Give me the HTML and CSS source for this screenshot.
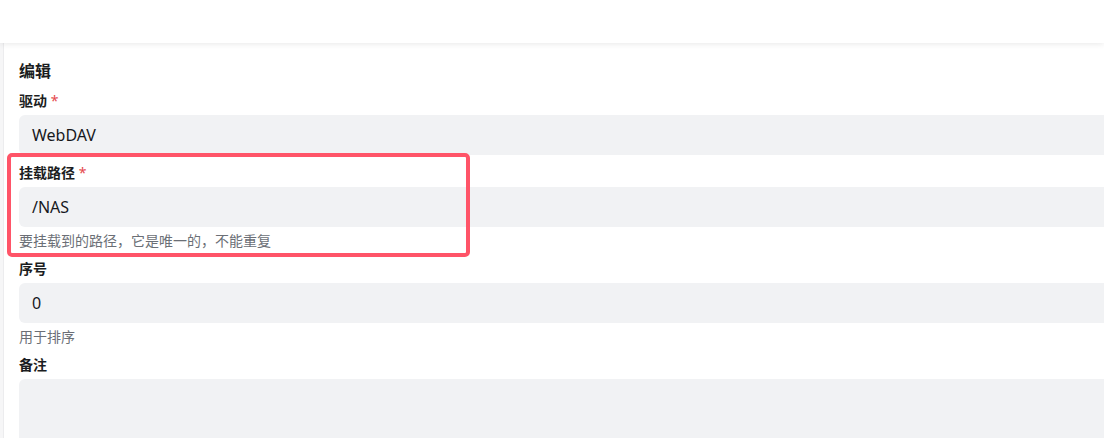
FILE: index.html
```html
<!DOCTYPE html>
<html lang="zh-CN">
<head>
<meta charset="utf-8">
<link rel="stylesheet" href="styles.css">
</head>
<body>
<header class="topbar"></header>
<main class="page">
  <section class="card">
    <h2 class="title">编辑</h2>
    <div class="field">
      <label class="label">驱动 <span class="req">*</span></label>
      <div class="input">WebDAV</div>
    </div>
    <div class="field highlighted">
      <label class="label">挂载路径 <span class="req">*</span></label>
      <div class="input">/NAS</div>
      <div class="help">要挂载到的路径，它是唯一的，不能重复</div>
      <div class="mark"></div>
    </div>
    <div class="field">
      <label class="label">序号</label>
      <div class="input">0</div>
      <div class="help">用于排序</div>
    </div>
    <div class="field">
      <label class="label">备注</label>
      <div class="textarea"></div>
    </div>
  </section>
</main>
</body>
</html>
```
FILE: styles.css
```css
html, body {
  margin: 0;
  padding: 0;
  height: 100%;
  overflow: hidden;
}
body {
  background: #f6f6f7;
  font-family: "Noto Sans", "Noto Sans CJK SC", sans-serif;
  color: #1b1d21;
}
.topbar {
  position: relative;
  z-index: 2;
  height: 43px;
  background: #fff;
  box-shadow: 0 1px 6px rgba(0, 0, 0, 0.09);
}
.page {
  padding-left: 3px;
}
.card {
  background: #fff;
  border-left: 1px solid #ececee;
  padding: 16px 0 0 15px;
  height: 379px;
  overflow: hidden;
  display: flex;
  flex-direction: column;
  gap: 8px;
}
.title {
  margin: 0;
  font-size: 16px;
  line-height: 24px;
  font-weight: 700;
}
.field {
  position: relative;
  display: flex;
  flex-direction: column;
  gap: 4px;
}
.label {
  font-size: 14px;
  line-height: 20px;
  font-weight: 600;
}
.req {
  color: #e5484d;
  font-weight: 400;
}
.input {
  height: 40px;
  margin-right: -40px;
  box-sizing: border-box;
  background: #f1f2f4;
  border-radius: 6px;
  padding: 0 13px;
  font-size: 16px;
  line-height: 40px;
  color: #16181c;
}
.textarea {
  height: 80px;
  margin-right: -40px;
  background: #f1f2f4;
  border-radius: 6px;
}
.help {
  font-size: 14px;
  line-height: 20px;
  color: #6b6f76;
}
.mark {
  position: absolute;
  left: -12px;
  top: -10px;
  width: 455px;
  height: 96px;
  border: 4px solid #ff5468;
  border-radius: 5px;
  pointer-events: none;
}
```
